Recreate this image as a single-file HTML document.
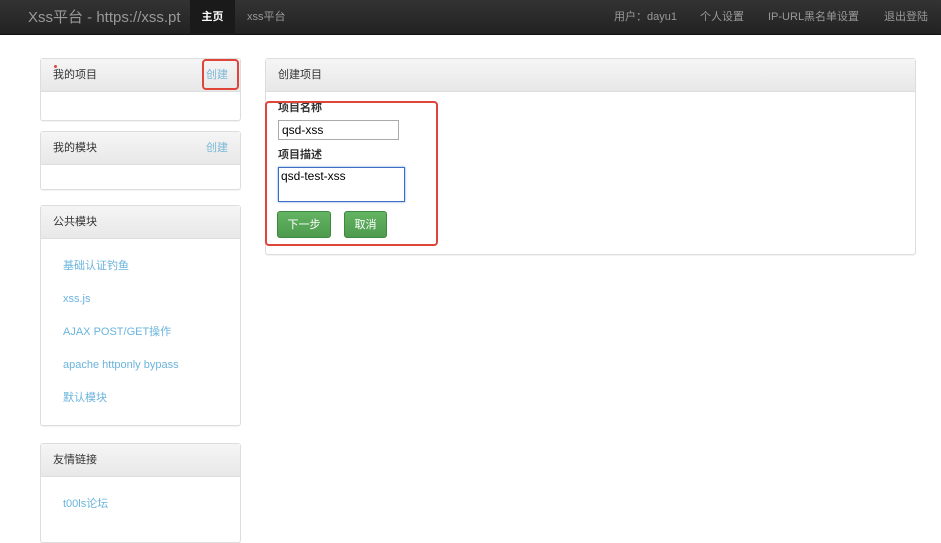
<!DOCTYPE html>
<html><head><meta charset="utf-8"><style>
*{box-sizing:border-box;margin:0;padding:0}
body{width:941px;height:531px;overflow:hidden;background:#fff;font-family:"Liberation Sans","Noto Sans CJK SC",sans-serif;font-size:11px;color:#333;position:relative}
.nav{position:absolute;left:0;top:0;width:941px;height:35px;background:linear-gradient(#333,#222);border-bottom:1px solid #111}
.nav span{position:absolute;top:0;line-height:35px;color:#999}
.brand{left:28px;font-size:15px;color:#999}
.active{left:190px;width:45px;height:35px;background:#1a1a1a;color:#fff!important;text-align:center;font-weight:bold}
.panel{position:absolute;border:1px solid #ddd;border-radius:3px;background:#fff;box-shadow:0 1px 1px rgba(0,0,0,.05)}
.ph{height:33px;line-height:33px;padding-left:12px;background:linear-gradient(#f5f5f5,#e8e8e8);border-bottom:1px solid #ddd;color:#333}
.ph a{position:absolute;right:12px;color:#7ab8d8}
.item{position:absolute;left:22px;color:#6ab4dd;line-height:14px;height:14px}
.red{position:absolute;border:2px solid #e0453a;border-radius:4px}
label{position:absolute;font-weight:bold;color:#333;line-height:14px}
.btn{position:absolute;height:27px;line-height:27px;color:#fff;background:linear-gradient(#62b462,#4e9a4e);border:1px solid #3f883f;border-radius:3px;text-align:center}
</style></head><body>
<div class="nav">
<span class="brand">Xss平台 - https://xss.pt</span>
<span class="active">主页</span>
<span style="left:247px">xss平台</span>
<span style="left:614px">用户：dayu1</span>
<span style="left:700px">个人设置</span>
<span style="left:768px">IP-URL黑名单设置</span>
<span style="left:884px">退出登陆</span>
</div>
<div class="panel" style="left:40px;top:58px;width:201px;height:63px"><div class="ph">我的项目<a>创建</a></div></div>
<div style="position:absolute;left:54px;top:65px;width:3px;height:3px;background:#e0453a;border-radius:50%"></div>
<div class="red" style="left:202px;top:59px;width:37px;height:31px"></div>
<div class="panel" style="left:40px;top:131px;width:201px;height:59px"><div class="ph">我的模块<a>创建</a></div></div>
<div class="panel" style="left:40px;top:205px;width:201px;height:221px"><div class="ph">公共模块</div>
<span class="item" style="top:53px">基础认证钓鱼</span>
<span class="item" style="top:86px">xss.js</span>
<span class="item" style="top:119px">AJAX POST/GET操作</span>
<span class="item" style="top:152px">apache httponly bypass</span>
<span class="item" style="top:185px">默认模块</span>
</div>
<div class="panel" style="left:40px;top:443px;width:201px;height:100px"><div class="ph">友情链接</div>
<span class="item" style="top:53px">t00ls论坛</span></div>
<div class="panel" style="left:265px;top:58px;width:651px;height:197px"><div class="ph">创建项目</div></div>
<label style="left:278px;top:101px">项目名称</label>
<div style="position:absolute;left:278px;top:120px;width:121px;height:20px;border:1px solid #aaa;padding-left:3px;line-height:18px;font-size:12px;color:#000">qsd-xss</div>
<label style="left:278px;top:148px">项目描述</label>
<div style="position:absolute;left:278px;top:167px;width:127px;height:35px;border:1px solid #3d6cc0;box-shadow:0 0 2px #6a9ae0;padding:1px 2px;font-size:12px;line-height:14px;color:#000">qsd-test-xss</div>
<div class="btn" style="left:277px;top:211px;width:54px">下一步</div>
<div class="btn" style="left:344px;top:211px;width:43px">取消</div>
<div class="red" style="left:265px;top:101px;width:173px;height:145px"></div>
</body></html>
